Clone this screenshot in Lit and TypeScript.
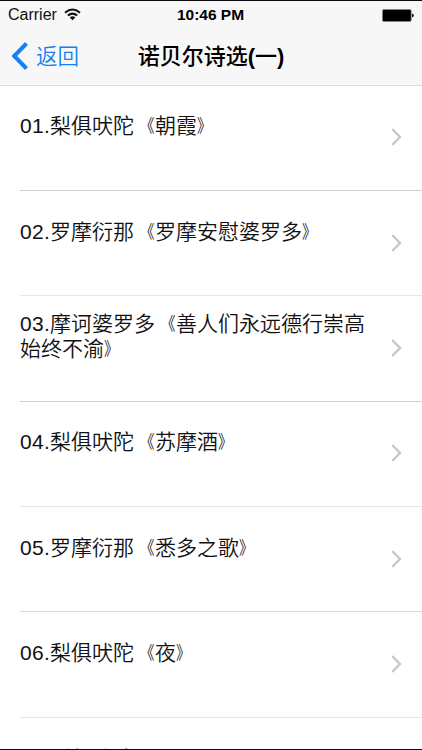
import { LitElement, html, css } from "lit";
import { customElement } from "lit/decorators.js";

interface Poem {
  no: string;
  source: string;
  name: string;
  rule: string;
}

const POEMS: Poem[] = [
  { no: "01.", source: "梨俱吠陀", name: "朝霞", rule: "dark" },
  { no: "02.", source: "罗摩衍那", name: "罗摩安慰婆罗多", rule: "light" },
  { no: "03.", source: "摩诃婆罗多", name: "善人们永远德行崇高始终不渝", rule: "dark" },
  { no: "04.", source: "梨俱吠陀", name: "苏摩酒", rule: "light" },
  { no: "05.", source: "罗摩衍那", name: "悉多之歌", rule: "mid" },
  { no: "06.", source: "梨俱吠陀", name: "夜", rule: "light" },
  { no: "07.", source: "梨俱吠陀", name: "", rule: "light" },
];

@customElement("app-root")
export class AppRoot extends LitElement {
  static styles = css`
    :host {
      display: flex;
      flex-direction: column;
      box-sizing: border-box;
      width: 100%;
      height: 750px;
      overflow: hidden;
      border-top: 1px solid #0c0c0e;
      border-bottom: 1px solid #0c0c0e;
      background: #fff;
      color: #111;
      font-family: "Liberation Sans", "Noto Sans CJK SC", sans-serif;
      text-spacing-trim: space-all;
    }
    header {
      flex: none;
      height: 84px;
      background: #f7f7f7;
      border-bottom: 1px solid #dcdcdc;
    }
    .status {
      display: grid;
      grid-template-columns: 1fr auto 1fr;
      align-items: center;
      height: 28px;
      padding: 0 8px;
      font-size: 16px;
    }
    .carrier {
      display: flex;
      align-items: center;
      gap: 7.5px;
    }
    .carrier svg {
      margin-top: -1px;
    }
    .time {
      margin-right: 1px;
      font-weight: 700;
      font-size: 15.5px;
      color: #000;
    }
    .battery {
      justify-self: end;
    }
    svg {
      display: block;
      flex: none;
    }
    .nav {
      display: grid;
      grid-template-columns: 1fr auto 1fr;
      align-items: center;
      height: 55px;
      padding: 0 11px;
    }
    .back {
      display: flex;
      align-items: center;
      gap: 8px;
      color: #1580f6;
      font-size: 21.5px;
      line-height: 28px;
    }
    .back svg {
      margin-top: -1px;
    }
    .label {
      padding-top: 1px;
      font-weight: 350;
    }
    h1 {
      margin: 0;
      padding-top: 1px;
      font-size: 22px;
      line-height: 28px;
      font-weight: 500;
      color: #000;
    }
    .paren {
      font-weight: 700;
    }
    ul {
      flex: 1;
      min-height: 0;
      margin: -0.6px 0 0;
      padding: 0;
      list-style: none;
      overflow: hidden;
    }
    li {
      display: flex;
      align-items: center;
      justify-content: space-between;
      box-sizing: border-box;
      height: 105.4px;
      margin-left: 20px;
      padding: 0 20px 0.8px 0;
      border-bottom: 1px solid #e6e6e6;
    }
    li:last-child {
      padding: 1px 20px 0 0;
    }
    .dark {
      border-bottom-color: #cfcfd0;
    }
    .mid {
      border-bottom-color: #dadadb;
    }
    .title {
      width: 350px;
      padding-bottom: 23px;
      font-size: 21px;
      line-height: 25px;
      font-weight: 350;
    }
    .no {
      letter-spacing: 0.3px;
    }
    .open,
    .close {
      display: inline-block;
      transform: scale(0.7, 0.86);
    }
    .open {
      transform-origin: 90% 50%;
    }
    .close {
      transform-origin: 0% 50%;
    }
  `;

  render() {
    return html`
      <header>
        <div class="status">
          <div class="carrier">
            <span>Carrier</span>
            <svg width="17" height="13" viewBox="0 0 17 13" fill="none" stroke="#111" stroke-width="2">
              <path d="M1 4.7Q8.5-1.7 16 4.7M3.8 7.6Q8.5 3.7 13.2 7.6" />
              <path d="M8.5 12.2L5.7 9.4Q8.5 7.2 11.3 9.4Z" fill="#111" stroke="none" />
            </svg>
          </div>
          <span class="time">10:46 PM</span>
          <svg class="battery" width="32" height="13" viewBox="0 0 32 13">
            <rect x=".4" y=".4" width="28.8" height="12.2" rx="1.6" fill="#000" stroke="#888" stroke-width=".7" />
            <path d="M30 4.5Q31.8 4.8 31.8 6.5T30 8.5Z" fill="#111" />
          </svg>
        </div>
        <div class="nav">
          <div class="back">
            <svg width="17" height="28" viewBox="0 0 17 28" fill="none" stroke="#1580f6" stroke-width="4">
              <path d="M15.5 1.5L3.2 14L15.5 26.5" />
            </svg>
            <span class="label">返回</span>
          </div>
          <h1>诺贝尔诗选<span class="paren">(</span>一<span class="paren">)</span></h1>
          <span></span>
        </div>
      </header>
      <ul>
        ${POEMS.map(
          (p) => html`<li class=${p.rule}>
            <span class="title"><span class="no">${p.no}</span>${p.source}${p.name
              ? html`<span class="open">《</span>${p.name}<span class="close">》</span>`
              : ""}</span>
            <svg width="11" height="18" viewBox="0 0 11 18" fill="none" stroke="#c7c7cc" stroke-width="2.4">
              <path d="M1.2 1L9 9L1.2 17" />
            </svg>
          </li>`
        )}
      </ul>
    `;
  }
}
